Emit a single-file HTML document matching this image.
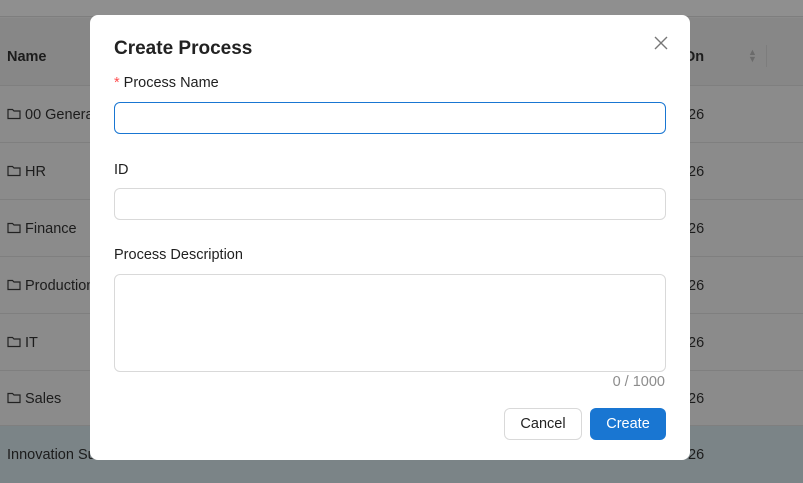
<!DOCTYPE html>
<html><head><style>
*{box-sizing:border-box;margin:0;padding:0}
body{width:803px;height:483px;overflow:hidden;background:#8b8b8b;font-family:"Liberation Sans",sans-serif;position:relative;color:#1c1c1c}
.top{position:absolute;left:0;top:0;width:803px;height:17px;background:#8f8f8f;border-bottom:1px solid #7e7e7e}
.row{position:absolute;left:0;width:803px;border-bottom:1px solid #7f7f7f;font-size:14.5px}
.row span{position:absolute;top:51%;transform:translateY(-50%)}
.hl{background:#7b8487}
.fold{display:inline-block;vertical-align:-1px;margin-right:4px}
.modal{position:absolute;left:90px;top:15px;width:600px;height:445px;background:#fff;border-radius:8px}
.ab{position:absolute}
.inp{position:absolute;left:24px;width:552px;border:1px solid #d9d9d9;border-radius:6px;background:#fff}
.lbl{position:absolute;left:24px;font-size:14.5px;color:#1f1f1f}
.btn{position:absolute;top:393px;height:32px;border-radius:6px;font-size:14.5px;display:flex;align-items:center;justify-content:center}
</style></head><body>
<div class="top"></div>
<div class="row" style="top:18px;height:68px;background:#878787"><span style="left:7px;top:39px;font-weight:bold">Name</span><span style="left:684px;top:39px;font-weight:bold">On</span>
<span style="left:748px;top:38px;font-size:9px;color:#6b6b6b;line-height:7px">▲<br>▼</span><span style="left:766px;top:38px;width:1px;height:22px;background:#7d7d7d"></span></div>
<div class="row" style="top:86px;height:57px"><span style="left:7px"><svg class="fold" width="14" height="12" viewBox="0 0 14 12"><path d="M1 1.5h4.5l1.5 1.5h6v7.5h-12z" fill="none" stroke="#222" stroke-width="1.2"/></svg>00 General</span><span style="left:688px">26</span></div>
<div class="row" style="top:143px;height:57px"><span style="left:7px"><svg class="fold" width="14" height="12" viewBox="0 0 14 12"><path d="M1 1.5h4.5l1.5 1.5h6v7.5h-12z" fill="none" stroke="#222" stroke-width="1.2"/></svg>HR</span><span style="left:688px">26</span></div>
<div class="row" style="top:200px;height:57px"><span style="left:7px"><svg class="fold" width="14" height="12" viewBox="0 0 14 12"><path d="M1 1.5h4.5l1.5 1.5h6v7.5h-12z" fill="none" stroke="#222" stroke-width="1.2"/></svg>Finance</span><span style="left:688px">26</span></div>
<div class="row" style="top:257px;height:57px"><span style="left:7px"><svg class="fold" width="14" height="12" viewBox="0 0 14 12"><path d="M1 1.5h4.5l1.5 1.5h6v7.5h-12z" fill="none" stroke="#222" stroke-width="1.2"/></svg>Production</span><span style="left:688px">26</span></div>
<div class="row" style="top:314px;height:57px"><span style="left:7px"><svg class="fold" width="14" height="12" viewBox="0 0 14 12"><path d="M1 1.5h4.5l1.5 1.5h6v7.5h-12z" fill="none" stroke="#222" stroke-width="1.2"/></svg>IT</span><span style="left:688px">26</span></div>
<div class="row" style="top:371px;height:55px"><span style="left:7px"><svg class="fold" width="14" height="12" viewBox="0 0 14 12"><path d="M1 1.5h4.5l1.5 1.5h6v7.5h-12z" fill="none" stroke="#222" stroke-width="1.2"/></svg>Sales</span><span style="left:688px">26</span></div>
<div class="row hl" style="top:426px;height:57px;border:none"><span style="left:7px">Innovation Submission</span><span style="left:688px">26</span></div>
<div class="modal">
<div class="ab" style="left:24px;top:23px;font-size:19px;font-weight:bold;color:#222">Create Process</div>
<svg class="ab" style="left:564px;top:21px" width="14" height="14" viewBox="0 0 14 14"><path d="M1 1L13 13M13 1L1 13" stroke="#777" stroke-width="1.4"/></svg>
<div class="lbl" style="top:60px"><span style="color:#ff4d4f;margin-right:4px">*</span>Process Name</div>
<div class="inp" style="top:87px;height:32px;border-color:#1976d2"></div>
<div class="lbl" style="top:147px">ID</div>
<div class="inp" style="top:173px;height:32px"></div>
<div class="lbl" style="top:232px">Process Description</div>
<div class="inp" style="top:259px;height:98px"></div>
<div class="ab" style="right:25px;top:359px;font-size:14.5px;color:#8c8c8c">0 / 1000</div>
<div class="btn" style="left:414px;width:78px;border:1px solid #d9d9d9;color:#222">Cancel</div>
<div class="btn" style="left:500px;width:76px;background:#1976d2;color:#fff">Create</div>
</div>
</body></html>
